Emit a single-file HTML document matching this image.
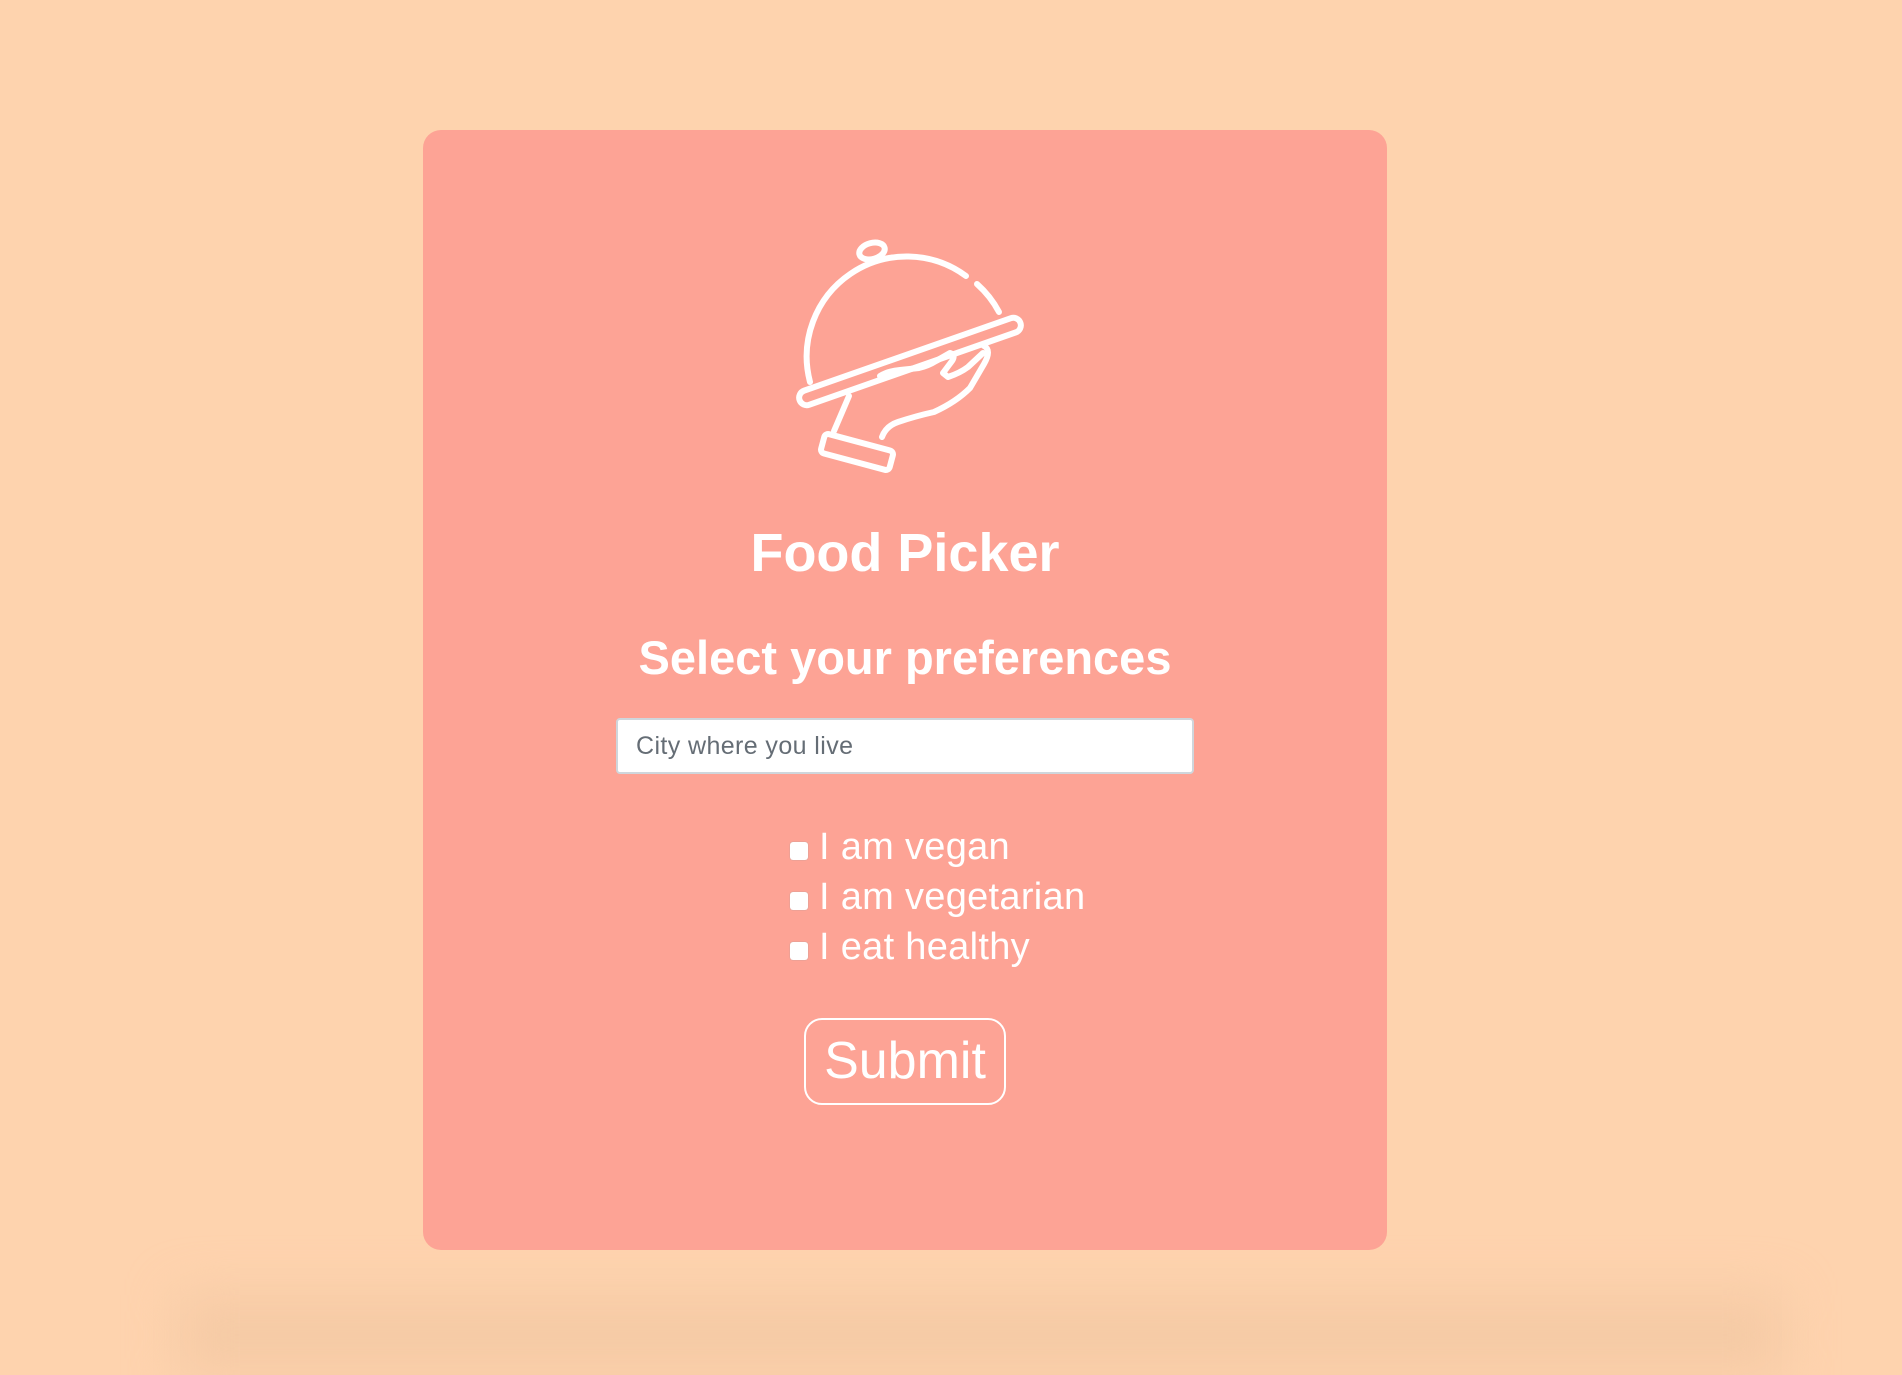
<!DOCTYPE html>
<html><head><meta charset="utf-8"><style>
html,body{margin:0;padding:0;width:1902px;height:1340px;overflow:hidden;background:#fed3ae;font-family:"Liberation Sans",sans-serif}
.shadow{position:absolute;left:180px;right:120px;top:1295px;height:80px;background:#f5caa5;filter:blur(25px)}
.card{position:absolute;left:423px;top:130px;width:964px;height:1120px;background:#fda395;border-radius:18px}
svg.icon{position:absolute;left:780px;top:220px}
h1{position:absolute;left:423px;width:964px;top:522px;margin:0;text-align:center;color:#fff;font-size:54px;font-weight:900}
h2{position:absolute;left:423px;width:964px;top:630px;margin:0;text-align:center;color:#fff;font-size:47px;font-weight:900}
.input{position:absolute;left:616px;top:718px;width:574px;height:52px;background:#fff;border:2px solid #cfd6dc;border-radius:4px}
.input span{position:absolute;left:18px;top:12px;font-size:25px;letter-spacing:0.4px;color:#656d75}
.cb{position:absolute;left:790px;width:18px;height:18px;background:#fff;border-radius:3px;box-shadow:0 0 1px #999}
.lbl{position:absolute;left:819px;color:#fff;font-size:38px;letter-spacing:0.3px;line-height:46px}
.btn{position:absolute;left:804px;top:1018px;width:198px;height:83px;border:2px solid #fff;border-radius:18px;color:#fff;font-size:52px;text-align:center;line-height:83px}
</style></head><body>
<div class="shadow"></div>
<div class="card"></div>
<svg class="icon" width="260" height="260" viewBox="0 0 260 260" fill="none" stroke="#fff" stroke-width="6" stroke-linecap="round" stroke-linejoin="round">
<path d="M30 162 A100 100 0 0 1 186 56"/>
<path d="M197 64 A100 100 0 0 1 219 92"/>
<ellipse cx="92" cy="31" rx="13" ry="8" transform="rotate(-15 92 31)"/>
<rect x="13" y="134" width="234" height="15" rx="7.5" transform="rotate(-19.3 130 141.5)"/>
<path d="M69 176 L54 211"/>
<path d="M102 217 Q106 206 118 202 Q136 196 154 192 Q176 182 190 168 L204 144 Q212 130 204 126"/>
<path d="M203 133 L188 147 Q180 153 168 157 L163 153 L172 141 Q176 135 170 133 L156 141 Q148 146 139 148 L120 150 Q108 151 100 156"/>
<rect x="41.5" y="222" width="71" height="20" rx="4" transform="rotate(15 77 232)"/>
</svg>
<h1>Food Picker</h1>
<h2>Select your preferences</h2>
<div class="input"><span>City where you live</span></div>
<div class="cb" style="top:842px"></div><div class="lbl" style="top:824px">I am vegan</div>
<div class="cb" style="top:892px"></div><div class="lbl" style="top:874px">I am vegetarian</div>
<div class="cb" style="top:942px"></div><div class="lbl" style="top:924px">I eat healthy</div>
<div class="btn">Submit</div>
</body></html>
